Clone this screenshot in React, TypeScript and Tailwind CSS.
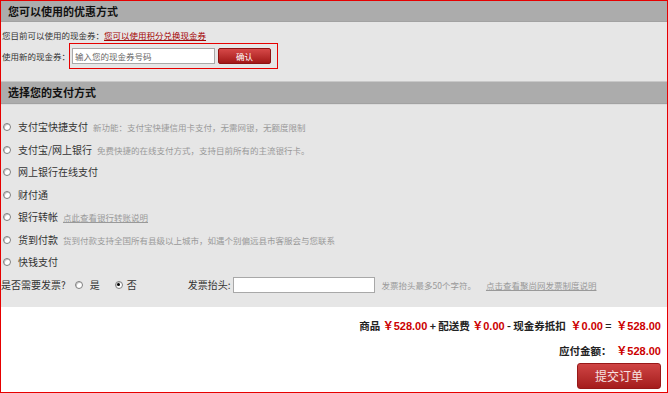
import { ReactNode } from "react";

function Radio({ checked = false }: { checked?: boolean }) {
  return (
    <span className="flex h-[8px] w-[8px] shrink-0 items-center justify-center rounded-full border border-[#7f7f7f] bg-white shadow-[inset_1px_1px_0_#c8c8c8]">
      {checked && <span className="h-[3px] w-[3px] rounded-full bg-black" />}
    </span>
  );
}

function PayRow({ label, children }: { label: string; children?: ReactNode }) {
  return (
    <div className="flex h-[22.5px] items-center">
      <span className="ml-[2px] mr-[7px]">
        <Radio />
      </span>
      <span className="text-[10px] text-[#333]">{label}</span>
      {children}
    </div>
  );
}

function Money({ children }: { children: ReactNode }) {
  return <span className="text-[#c00] text-[11px] font-['Liberation_Sans','Noto_Sans_CJK_SC',sans-serif]">{children}</span>;
}

export default function App() {
  return (
    <div className="flex h-[393px] w-[668px] flex-col overflow-hidden border border-[#e60000] bg-white font-['Noto_Sans_CJK_SC',sans-serif] leading-none">
      {/* Coupon section */}
      <div className="flex h-[21px] shrink-0 items-center border-b border-[#a2a2a2] bg-[#acacac] px-[7px] text-[11px] font-bold text-[#111]">
        您可以使用的优惠方式
      </div>
      <div className="h-[59px] shrink-0 bg-[#e6e6e6] pt-[6px] pl-[1px]">
        <div className="flex h-[14px] items-center whitespace-nowrap text-[8.5px] text-[#333]">
          您目前可以使用的现金券：
          <span className="text-[#a30000] underline">您可以使用积分兑换现金券</span>
        </div>
        <div className="mt-[1px] flex h-[26px] items-center">
          <span className="w-[67px] shrink-0 whitespace-nowrap text-[8.5px] text-[#333]">使用新的现金券：</span>
          <div className="flex h-[26px] items-center border border-[#e60000] pl-[2px] pr-[6px]">
            <input
              className="h-[16px] w-[143px] border border-[#a8a8a8] bg-white px-[2px] text-[8.5px] outline-none placeholder:text-[#666]"
              placeholder="输入您的现金券号码"
            />
            <button className="ml-[3px] flex h-[16px] w-[53px] items-center justify-center rounded-[2px] border border-[#8e1212] bg-gradient-to-b from-[#d64848] to-[#a31616] text-[8.5px] text-white">
              确认
            </button>
          </div>
        </div>
      </div>

      {/* Payment section */}
      <div className="flex h-[23px] shrink-0 items-center border-y border-t-[#c8c8c8] border-b-[#a2a2a2] bg-[#acacac] px-[7px] text-[11px] font-bold text-[#111]">
        选择您的支付方式
      </div>
      <div className="h-[203px] shrink-0 border-t border-[#dcdcdc] bg-[#e6e6e6] pt-[11px]">
        <PayRow label="支付宝快捷支付">
          <span className="ml-[5px] text-[8.5px] text-[#999]">新功能：支付宝快捷信用卡支付，无需网银，无额度限制</span>
        </PayRow>
        <PayRow label="支付宝/网上银行">
          <span className="ml-[5px] text-[8.5px] text-[#999]">免费快捷的在线支付方式，支持目前所有的主流银行卡。</span>
        </PayRow>
        <PayRow label="网上银行在线支付" />
        <PayRow label="财付通" />
        <PayRow label="银行转帐">
          <span className="ml-[5px] text-[8.5px] text-[#999] underline">点此查看银行转账说明</span>
        </PayRow>
        <PayRow label="货到付款">
          <span className="ml-[5px] text-[8.5px] text-[#999]">货到付款支持全国所有县级以上城市，如遇个别偏远县市客服会与您联系</span>
        </PayRow>
        <PayRow label="快钱支付" />
        <div className="flex h-[22.5px] items-center text-[10px] text-[#333]">
          <span>是否需要发票?</span>
          <span className="ml-[9px] mr-[7px]">
            <Radio />
          </span>
          <span>是</span>
          <span className="ml-[15px] mr-[4px]">
            <Radio checked />
          </span>
          <span>否</span>
          <span className="ml-[51px]">发票抬头:</span>
          <input className="ml-[2px] h-[16px] w-[142px] border border-[#a8a8a8] bg-white outline-none" />
          <span className="ml-[7px] text-[8.5px] text-[#999]">发票抬头最多50个字符。</span>
          <span className="ml-[10px] text-[8.5px] text-[#999] underline">点击查看聚尚网发票制度说明</span>
        </div>
      </div>

      {/* Totals */}
      <div className="flex flex-1 flex-col items-end bg-white pr-[6px] pt-[12px] text-[10.5px] font-bold text-[#222]">
        <div className="flex h-[14px] items-center whitespace-pre">
          商品 <Money>￥528.00</Money> + 配送费 <Money>￥0.00</Money> - 现金券抵扣  <Money>￥0.00</Money> =  <Money>￥528.00</Money>
        </div>
        <div className="mt-[11px] flex h-[14px] items-center whitespace-pre">
          应付金额：  <Money>￥528.00</Money>
        </div>
        <button className="mt-[5px] flex h-[26px] w-[84px] items-center justify-center rounded-[3px] border border-[#981818] bg-gradient-to-b from-[#cf4444] to-[#a51c1c] text-[12px] font-normal text-[#f6e2e2]">
          提交订单
        </button>
      </div>
    </div>
  );
}
